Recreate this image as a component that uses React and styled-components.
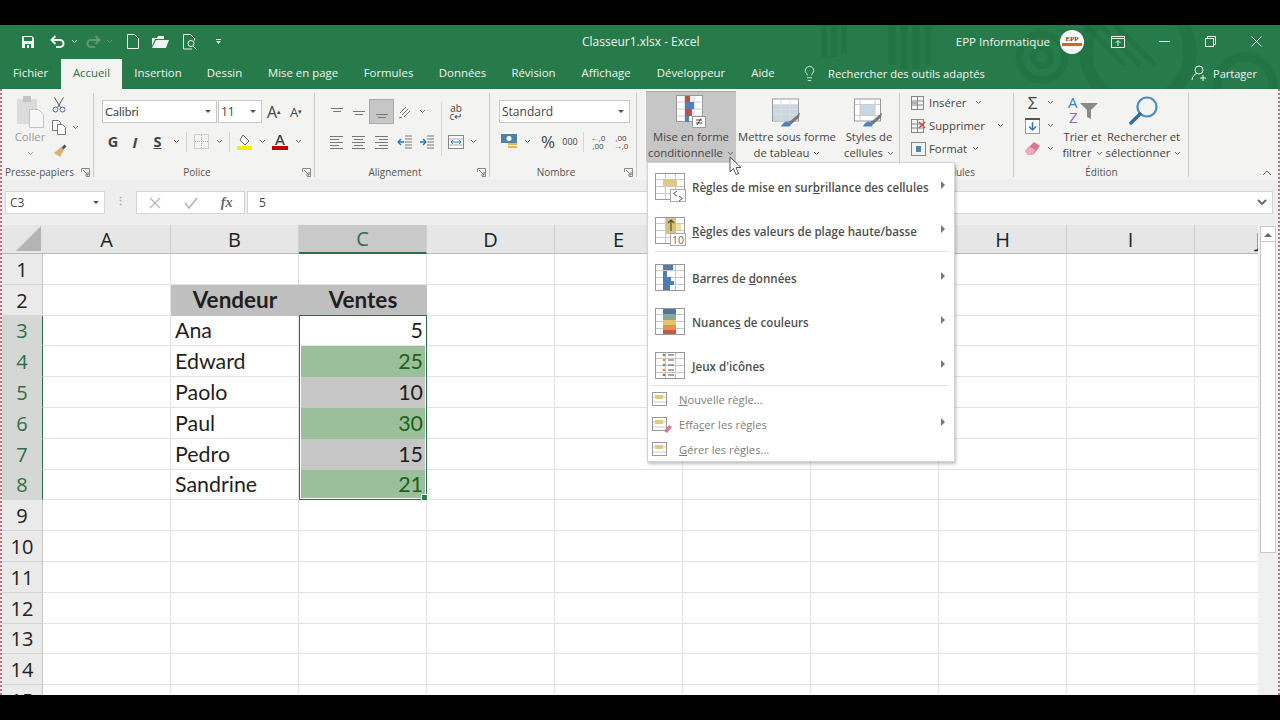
import React from "react";
import styled, { createGlobalStyle } from "styled-components";
import { Lightbulb } from "lucide-react";

const GlobalStyle = createGlobalStyle`
  html, body {
    margin: 0;
    padding: 0;
    background: #000;
  }
  * {
    box-sizing: border-box;
  }
`;

const UI = `"Open Sans", "Noto Sans", "Liberation Sans", sans-serif`;
const GREEN = "#277a4a";

const Page = styled.div`
  width: 1280px;
  height: 720px;
  padding: 25px 0;
  background: #000;
  font-family: ${UI};
  overflow: hidden;
`;
const Window = styled.div`
  position: relative;
  height: 670px;
  background: #f0f0f0;
  overflow: hidden;
  display: flex;
  flex-direction: column;
  &::before,
  &::after {
    content: "";
    position: absolute;
    top: 64px;
    bottom: 0;
    width: 2px;
    z-index: 5;
    background: repeating-linear-gradient(to bottom, #b9757a 0 2px, #f4eeee 2px 4px);
  }
  &::before {
    left: 0;
  }
  &::after {
    right: 0;
  }
`;

/* title bar + tabs */
const Head = styled.div`
  position: relative;
  background: ${GREEN};
  color: #eef5f0;
`;
const Pattern = styled.svg`
  position: absolute;
  top: 0;
  left: 800px;
`;
const TitleRow = styled.div`
  position: relative;
  height: 33px;
  display: grid;
  grid-template-columns: 1fr 116px 1fr;
  align-items: center;
`;
const Qat = styled.div`
  display: flex;
  align-items: center;
  padding-left: 19px;
`;
const QatSlot = styled.div`
  width: ${(p) => p.$w}px;
  margin-left: ${(p) => p.$ml || 0}px;
  display: flex;
  justify-content: center;
  align-items: center;
`;
const Title = styled.div`
  font-size: 12px;
  text-align: center;
  white-space: nowrap;
`;
const TitleRight = styled.div`
  display: flex;
  align-items: center;
  justify-content: flex-end;
  padding-right: 1px;
`;
const UserName = styled.div`
  font-size: 11.6px;
  margin-right: 10px;
  white-space: nowrap;
`;
const Avatar = styled.div`
  position: relative;
  width: 24px;
  height: 24px;
  border-radius: 50%;
  background: #fff;
  color: #6b3d30;
  font: 700 7px "Liberation Serif", serif;
  text-align: center;
  padding-top: 5px;
  overflow: hidden;
  margin-right: 11px;
  &::after {
    content: "";
    position: absolute;
    left: 2px;
    right: 2px;
    top: 13px;
    height: 3px;
    background: #c9682c;
  }
`;
const WinBtn = styled.div`
  width: 46px;
  display: flex;
  justify-content: center;
  align-items: center;
`;
const TabRow = styled.div`
  position: relative;
  height: 31px;
  display: flex;
  align-items: flex-end;
  font-size: 11.4px;
`;
const Tab = styled.div`
  width: ${(p) => p.$w}px;
  height: 30px;
  line-height: 28px;
  text-align: center;
  white-space: nowrap;
  background: ${(p) => (p.$active ? "#f3f3f2" : "transparent")};
  color: ${(p) => (p.$active ? "#2b6f47" : "inherit")};
`;
const Tell = styled.div`
  display: flex;
  align-items: center;
  height: 30px;
  margin-left: 13px;
  gap: 10px;
  padding-bottom: 2px;
  font-size: 11.2px;
  white-space: nowrap;
`;
const Share = styled.div`
  margin-left: auto;
  display: flex;
  align-items: center;
  gap: 6px;
  height: 30px;
  padding: 0 23px 2px 0;
  font-size: 11px;
`;

/* ribbon */
const Ribbon = styled.div`
  position: relative;
  height: 91px;
  display: flex;
  background: #f3f3f2;
  color: #444;
  font-size: 11.3px;
`;
const Group = styled.div`
  position: relative;
  width: ${(p) => p.$w}px;
  flex: none;
  display: flex;
  flex-direction: column;
  &::after {
    content: "";
    position: absolute;
    top: 4px;
    bottom: 3px;
    right: 0;
    width: 1px;
    background: #c9c9c9;
  }
`;
const GroupBody = styled.div`
  height: 76px;
  padding: ${(p) => p.$pad || "11px 0 0 8px"};
  display: flex;
  flex-direction: ${(p) => (p.$row ? "row" : "column")};
  gap: ${(p) => p.$gap || 0}px;
`;
const GroupLabel = styled.div`
  height: 15px;
  line-height: 14px;
  font-size: 10px;
  text-align: center;
  white-space: nowrap;
  color: #555;
  padding-right: ${(p) => (p.$launch ? 15 : 0)}px;
`;
const Launcher = styled.svg`
  position: absolute;
  right: 4px;
  bottom: 3px;
`;
const Tools = styled.div`
  height: 23px;
  margin-bottom: ${(p) => p.$mb || 0}px;
  display: flex;
  align-items: center;
`;
const Tool = styled.div`
  width: ${(p) => p.$w}px;
  height: 23px;
  flex: none;
  display: flex;
  align-items: center;
  justify-content: center;
  color: #444;
  font-size: ${(p) => p.$fs || 13}px;
  font-weight: ${(p) => (p.$bold ? 700 : 400)};
  font-style: ${(p) => (p.$italic ? "italic" : "normal")};
  text-decoration: ${(p) => (p.$under ? "underline" : "none")};
  background: ${(p) => (p.$on ? "#c6c6c6" : "transparent")};
  outline: ${(p) => (p.$on ? "1px solid #aaa" : "none")};
`;
const Stack = styled.span`
  line-height: ${(p) => p.$lh}px;
  text-align: center;
`;
const ToolSep = styled.div`
  width: 1px;
  height: 20px;
  flex: none;
  background: #d6d6d6;
  margin: 0 ${(p) => p.$m || 3}px;
`;
const TallSep = styled(ToolSep)`
  height: 54px;
  margin-top: 2px;
`;
const Combo = styled.div`
  width: ${(p) => p.$w}px;
  height: 23px;
  flex: none;
  display: flex;
  align-items: center;
  justify-content: space-between;
  margin-right: ${(p) => p.$mr || 0}px;
  padding: 0 5px 0 2px;
  background: #fff;
  border: 1px solid #c8c8c8;
  font-family: ${(p) => (p.$calibri ? "Lato, sans-serif" : "inherit")};
  font-size: 12px;
  color: #444;
`;
const Caret = styled.span`
  width: 0;
  height: 0;
  border-left: 3px solid transparent;
  border-right: 3px solid transparent;
  border-top: 3px solid #555;
`;
const Big = styled.div`
  width: ${(p) => p.$w}px;
  height: 71px;
  flex: none;
  margin-left: ${(p) => p.$ml || 0}px;
  display: flex;
  flex-direction: column;
  align-items: center;
  background: ${(p) => (p.$on ? "#c6c6c6" : "transparent")};
  box-shadow: ${(p) => (p.$on ? "inset 0 1px 0 #aaa" : "none")};
  white-space: nowrap;
  line-height: 16px;
  color: ${(p) => (p.$off ? "#999" : "#444")};
`;
const BigIcon = styled.div`
  height: 38px;
  display: flex;
  align-items: flex-end;
  justify-content: center;
  padding-bottom: 1px;
  flex: none;
`;
const BigLine = styled.div`
  display: flex;
  align-items: center;
  gap: 4px;
  height: 16px;
`;
const SideCol = styled.div`
  display: flex;
  flex-direction: column;
  flex: none;
  width: ${(p) => (p.$w ? `${p.$w}px` : "auto")};
  margin-left: ${(p) => p.$ml || 0}px;
  padding-top: ${(p) => p.$pt || 0}px;
`;
const SideRow = styled.div`
  display: flex;
  align-items: center;
  height: 23px;
  gap: 6px;
`;
const CellRow = styled.div`
  height: 23px;
  display: flex;
  align-items: center;
  gap: 3px;
`;
const CellRowGap = styled.span`
  margin-left: ${(p) => p.$m}px;
  display: flex;
`;
const Collapse = styled.svg`
  position: absolute;
  right: 8px;
  bottom: 4px;
`;

/* formula bar */
const FormulaBar = styled.div`
  height: 45px;
  flex: none;
  padding: 11px 7px 11px 5px;
  display: flex;
  align-items: stretch;
  background: #eeeeee;
  color: #444;
  font-size: 12px;
`;
const NameBox = styled.div`
  width: 100px;
  flex: none;
  display: flex;
  align-items: center;
  justify-content: space-between;
  padding: 0 5px 0 4px;
  background: #fff;
  border: 1px solid #d4d4d4;
`;
const Dots = styled.div`
  width: 31px;
  flex: none;
  color: #aaa;
  font-size: 11px;
  text-align: center;
  line-height: 20px;
  font-weight: 700;
`;
const FxBox = styled.div`
  width: 109px;
  flex: none;
  margin-right: 2px;
  display: flex;
  align-items: center;
  justify-content: space-around;
  background: #fff;
  border: 1px solid #d4d4d4;
  color: #aaa;
`;
const Fx = styled.span`
  font: italic 700 14px "Liberation Serif", serif;
  color: #666;
`;
const FormulaInput = styled.div`
  flex: 1;
  display: flex;
  align-items: center;
  justify-content: space-between;
  padding: 0 5px 0 11px;
  background: #fff;
  border: 1px solid #d4d4d4;
`;

/* sheet */
const SheetArea = styled.div`
  flex: 1;
  min-height: 0;
  display: flex;
  background: #f0f0f0;
`;
const Sheet = styled.div`
  position: relative;
  width: 1258px;
  flex: none;
  display: grid;
  grid-template-columns: 43px repeat(10, 128px);
  grid-template-rows: 29px repeat(15, 30.8px);
  overflow: hidden;
  background: #fff;
  font-family: Lato, "Liberation Sans", sans-serif;
  font-size: 21.4px;
  color: #1f1f1f;
`;
const Corner = styled.div`
  position: relative;
  background: #e6e6e6;
  border-bottom: 1px solid #b8b8b8;
  &::after {
    content: "";
    position: absolute;
    right: 2px;
    bottom: 2px;
    width: 0;
    height: 0;
    border-left: 25px solid transparent;
    border-bottom: 25px solid #b4b4b4;
  }
`;
const ColHead = styled.div`
  display: flex;
  align-items: center;
  justify-content: center;
  overflow: hidden;
  font-family: ${UI};
  font-size: 20px;
  background: ${(p) => (p.$on ? "#c9c9c9" : "#e6e6e6")};
  color: ${(p) => (p.$on ? "#2f6e4a" : "#222")};
  border-right: 1px solid #cfcfcf;
  border-bottom: ${(p) => (p.$on ? "2px solid #2f6e4a" : "1px solid #b8b8b8")};
`;
const RowHead = styled.div`
  display: flex;
  align-items: center;
  justify-content: center;
  padding: 1px 0 0 2px;
  font-family: ${UI};
  font-size: 20px;
  background: ${(p) => (p.$on ? "#d5d7d5" : "#eaeaea")};
  color: ${(p) => (p.$on ? "#2f6e4a" : "#222")};
  border-right: ${(p) => (p.$on ? "1px solid #2f6e4a" : "1px solid #c4c4c4")};
  border-bottom: 1px solid #d6d6d6;
`;
const Cell = styled.div`
  display: flex;
  align-items: center;
  padding: 0 3px 0 4px;
  white-space: nowrap;
  justify-content: ${(p) => (p.$head ? "center" : p.$num ? "flex-end" : "flex-start")};
  font-size: ${(p) => (p.$head ? "22.5px" : "inherit")};
  font-weight: ${(p) => (p.$head ? 700 : 400)};
  background: ${(p) => (p.$head ? "#bfbfbf" : p.$bg || "#fff")};
  color: ${(p) => p.$fg || "#1f1f1f"};
  border-right: 1px solid ${(p) => (p.$head ? "#bfbfbf" : p.$bg ? p.$bg : "#e2e2e2")};
  border-bottom: 1px solid ${(p) => (p.$head ? "#bfbfbf" : p.$bg ? p.$bg : "#e2e2e2")};
`;
const Selection = styled.div`
  position: absolute;
  grid-column: 4 / 5;
  grid-row: 4 / 10;
  inset: -1px 0 0 0;
  border: 1px solid #2f6e4a;
  box-shadow: inset 0 0 0 1px #fff;
  &::after {
    content: "";
    position: absolute;
    right: -2px;
    bottom: -2px;
    width: 5px;
    height: 5px;
    background: #2f7f55;
    border: 1px solid #fff;
  }
`;
const ScrollBar = styled.div`
  width: 19px;
  flex: none;
  padding: 1px 1px 0 2px;
  display: flex;
  flex-direction: column;
`;
const ScrollBtn = styled.div`
  height: 16px;
  background: #fff;
  border: 1px solid #c8c8c8;
  display: flex;
  align-items: center;
  justify-content: center;
`;
const ScrollThumb = styled.div`
  height: 311px;
  background: #fff;
  border: 1px solid #c8c8c8;
  border-top: 0;
`;

/* conditional formatting menu */
const Menu = styled.div`
  position: absolute;
  left: 647px;
  top: 137px;
  width: 308px;
  height: 300px;
  z-index: 3;
  padding-top: 2px;
  background: #fff;
  border: 1px solid #d4d4d4;
  box-shadow: 1px 2px 3px rgba(0, 0, 0, 0.25);
  color: #4f4f4f;
`;
const BigItem = styled.div`
  height: 44px;
  display: flex;
  align-items: center;
  padding: 0 9px 0 6px;
  font-size: 11.6px;
  font-weight: 600;
  white-space: nowrap;
`;
const SmallItem = styled.div`
  height: 25px;
  display: flex;
  align-items: center;
  padding: 0 9px 0 4px;
  font-size: 11.2px;
  color: #7d7d7d;
  white-space: nowrap;
`;
const ItemText = styled.span`
  flex: 1;
  margin-left: ${(p) => p.$m}px;
`;
const Arrow = styled.span`
  width: 0;
  height: 0;
  margin-bottom: 5px;
  border-top: 4px solid transparent;
  border-bottom: 4px solid transparent;
  border-left: 4px solid #777;
`;
const MenuLine = styled.div`
  height: 1px;
  margin: ${(p) => p.$m};
  background: #e2e2e2;
`;
const Cursor = styled.svg`
  position: absolute;
  left: 729px;
  top: 131px;
  z-index: 4;
`;

/* drawings */
const Chev = ({ c = "#666" }) => (
  <svg width="7" height="5" viewBox="0 0 7 5">
    <path d="M1 1l2.5 2.5L6 1" fill="none" stroke={c} strokeWidth="1" />
  </svg>
);
const Launch = () => (
  <Launcher width="9" height="9" viewBox="0 0 9 9">
    <path d="M.5 4V.5H8.5V8.5H5" fill="none" stroke="#888" />
    <path d="M2 2l5 5M7 4v3H4" fill="none" stroke="#777" />
  </Launcher>
);
const Lines = ({ rows, w = 14 }) => (
  <svg width={w + 2} height="16" viewBox={`0 0 ${w + 2} 16`}>
    {rows.map(([x, y, l], i) => (
      <rect key={i} x={x} y={y} width={l} height="1" fill="#777" />
    ))}
  </svg>
);
const MenuIcon = ({ children }) => (
  <svg width="32" height="30" viewBox="0 0 32 30" style={{ flex: "none" }}>
    <rect x="1.5" y="1.500" width="29" height="26" fill="#fff" stroke="#999" />
    <path d="M11.500 2v25M21.500 2v25M2 7.500h28M2 14.500h28M2 21.500h28" stroke="#c8c8c8" />
    {children}
  </svg>
);
const MiniRule = ({ children }) => (
  <svg width="20" height="18" viewBox="0 0 20 18" style={{ flex: "none" }}>
    <rect x=".5" y="1.5" width="14" height="13" fill="#fff" stroke="#999" />
    <path d="M1 6h13M1 11h13" stroke="#ccc" />
    <rect x="3" y="4" width="8" height="4" fill="#e2c982" />
    {children}
  </svg>
);

const SaveIcon = () => (
  <svg width="14" height="14" viewBox="0 0 14 14" fill="none">
    <path d="M1 1h10l2 2v10H1z" fill="#eef5f0" />
    <rect x="3" y="2" width="8" height="4" fill={GREEN} />
    <rect x="4" y="9" width="6" height="4" fill={GREEN} />
    <rect x="6" y="10" width="2" height="3" fill="#eef5f0" />
  </svg>
);
const UndoIcon = ({ c = "#eef5f0", flip }) => (
  <svg
    width="15"
    height="13"
    viewBox="0 0 15 13"
    fill="none"
    style={{ transform: flip ? "scaleX(-1)" : "none" }}
  >
    <path d="M2 5h8a3.2 3.2 0 0 1 0 7H6" stroke={c} strokeWidth="2" />
    <path d="M5.5 1L1.5 5l4 4" stroke={c} strokeWidth="2" />
  </svg>
);
const MergeIcon = () => (
  <svg width="16" height="16" viewBox="0 0 16 16" fill="none">
    <rect x=".5" y="1.5" width="15" height="13" fill="#fff" stroke="#888" />
    <path d="M1 5h14M1 11h14" stroke="#aaa" />
    <path d="M3 8h10M3 8l2-2M3 8l2 2M13 8l-2-2M13 8l-2 2" stroke="#2a78b8" />
  </svg>
);
const ScissorsIcon = () => (
  <svg width="14" height="16" viewBox="0 0 14 16" fill="none" stroke="#555">
    <path d="M2.500 .5l6 10M11.500 .5l-6 10" />
    <circle cx="3.500" cy="12.500" r="2.500" stroke="#4a6f9a" />
    <circle cx="10.500" cy="12.500" r="2.500" stroke="#4a6f9a" />
  </svg>
);

const ROWS = [
  [],
  [{ text: "Vendeur", head: 1 }, { text: "Ventes", head: 1 }],
  [{ text: "Ana" }, { text: "5", num: 1 }],
  [{ text: "Edward" }, { text: "25", num: 1, tone: "g" }],
  [{ text: "Paolo" }, { text: "10", num: 1, tone: "s" }],
  [{ text: "Paul" }, { text: "30", num: 1, tone: "g" }],
  [{ text: "Pedro" }, { text: "15", num: 1, tone: "s" }],
  [{ text: "Sandrine" }, { text: "21", num: 1, tone: "g" }],
];
const COLS = ["A", "B", "C", "D", "E", "F", "G", "H", "I", "J"];
const TONES = {
  g: { bg: "#9bbf9b", fg: "#1c611c" },
  s: { bg: "#c6c6c6", fg: "#1f1f1f" },
};

const SheetRows = () =>
  Array.from({ length: 15 }, (_, i) => {
    const n = i + 1;
    const data = ROWS[i] || [];
    return (
      <React.Fragment key={n}>
        <RowHead $on={n >= 3 && n <= 8}>{n}</RowHead>
        {COLS.map((col, c) => {
          const d = c === 1 ? data[0] : c === 2 ? data[1] : null;
          const tone = d && d.tone ? TONES[d.tone] : null;
          return (
            <Cell
              key={col}
              $head={d && d.head}
              $num={d && d.num}
              $bg={tone ? tone.bg : undefined}
              $fg={tone ? tone.fg : undefined}
            >
              {d ? d.text : ""}
            </Cell>
          );
        })}
      </React.Fragment>
    );
  });

const App = () => (
  <>
    <GlobalStyle />
    <Page>
      <Window>
        <Head>
          <Pattern width="480" height="64" viewBox="0 0 480 64" fill="none" stroke="#1f6c3f" strokeOpacity=".4">
            <path d="M24 0v32M34 0v32M44 0v28" strokeWidth="5" />
            <path d="M92 0v40M104 0v44M116 0v44M128 0v40" strokeWidth="7" />
            <circle cx="242" cy="32" r="9" strokeWidth="6" />
            <circle cx="242" cy="32" r="23" strokeWidth="7" />
            <circle cx="338" cy="27" r="52" strokeWidth="13" />
            <path d="M285 0l40 40M300 0l40 40M315 0l40 40" strokeWidth="5" />
            <circle cx="445" cy="60" r="28" strokeWidth="9" />
          </Pattern>
          <TitleRow>
            <Qat>
              <QatSlot $w={17}><SaveIcon /></QatSlot>
              <QatSlot $w={16} $ml={13}><UndoIcon /></QatSlot>
              <QatSlot $w={10} $ml={4}><Chev c="#cfe3d6" /></QatSlot>
              <QatSlot $w={16} $ml={6}><UndoIcon c="#5d9a76" flip /></QatSlot>
              <QatSlot $w={8} $ml={4}><Chev c="#5d9a76" /></QatSlot>
              <QatSlot $w={12} $ml={14}>
                <svg width="12" height="15" viewBox="0 0 12 15" fill="none" stroke="#eef5f0">
                  <path d="M.5.5h7l4 4v10H.5z" />
                </svg>
              </QatSlot>
              <QatSlot $w={18} $ml={12}>
                <svg width="17" height="12" viewBox="0 0 17 12" fill="#eef5f0">
                  <path d="M0 2h5l1-2h6v3H3L0 10z" />
                  <path d="M4 4h13l-3 8H0z" />
                </svg>
              </QatSlot>
              <QatSlot $w={16} $ml={13}>
                <svg width="15" height="16" viewBox="0 0 15 16" fill="none" stroke="#eef5f0">
                  <path d="M9 15H.5V.5h7l4 4v2" />
                  <circle cx="8" cy="9.5" r="3" />
                  <path d="M10 12l3.5 3.5" />
                </svg>
              </QatSlot>
              <QatSlot $w={8} $ml={16}>
                <svg width="7" height="7" viewBox="0 0 7 7" fill="#dcebe1">
                  <path d="M1 1h5v1H1zM1 3h5L3.5 6z" />
                </svg>
              </QatSlot>
            </Qat>
            <Title>Classeur1.xlsx - Excel</Title>
            <TitleRight>
              <UserName>EPP Informatique</UserName>
              <Avatar>EPP</Avatar>
              <WinBtn>
                <svg width="14" height="12" viewBox="0 0 14 12" fill="none" stroke="#eef5f0">
                  <rect x=".5" y=".5" width="13" height="11" />
                  <path d="M1 2.5h12M7 10V5M4.5 7L7 4.5 9.5 7" />
                </svg>
              </WinBtn>
              <WinBtn>
                <svg width="11" height="2" viewBox="0 0 11 2"><rect width="11" height="1" fill="#eef5f0" /></svg>
              </WinBtn>
              <WinBtn>
                <svg width="11" height="11" viewBox="0 0 11 11" fill="none" stroke="#eef5f0">
                  <rect x=".5" y="2.5" width="8" height="8" />
                  <path d="M2.5 2.5v-2h8v8h-2" />
                </svg>
              </WinBtn>
              <WinBtn>
                <svg width="11" height="11" viewBox="0 0 11 11" stroke="#eef5f0">
                  <path d="M.5.5l10 10M10.5.5l-10 10" />
                </svg>
              </WinBtn>
            </TitleRight>
          </TitleRow>
          <TabRow>
            <Tab $w={61}>Fichier</Tab>
            <Tab $w={61} $active>Accueil</Tab>
            <Tab $w={72}>Insertion</Tab>
            <Tab $w={61}>Dessin</Tab>
            <Tab $w={96}>Mise en page</Tab>
            <Tab $w={75}>Formules</Tab>
            <Tab $w={73}>Données</Tab>
            <Tab $w={69}>Révision</Tab>
            <Tab $w={76}>Affichage</Tab>
            <Tab $w={94}>Développeur</Tab>
            <Tab $w={50}>Aide</Tab>
            <Tell>
              <Lightbulb size={17} strokeWidth={1.2} />
              Rechercher des outils adaptés
            </Tell>
            <Share>
              <svg width="16" height="16" viewBox="0 0 16 16" fill="none" stroke="#eef5f0">
                <circle cx="8" cy="5" r="4" />
                <path d="M1 15c.5-3.500 2.500-6 5-6.500M9 13h6M12 10v6" />
              </svg>
              Partager
            </Share>
          </TabRow>
        </Head>

        <Ribbon>
          <Group $w={94}>
            <GroupBody $row $pad="2px 0 0 12px">
              <Big $w={36} $off>
                <BigIcon>
                  <svg width="28" height="33" viewBox="0 0 28 33">
                    <rect x="1" y="4" width="20" height="25" fill="#dcdcdc" />
                    <rect x="7" y="1" width="8" height="6" fill="#c4c4c4" />
                    <path d="M13.500 14.500h9l5 5v13h-14z" fill="#f7f7f7" stroke="#c2c2c2" />
                  </svg>
                </BigIcon>
                <BigLine>Coller</BigLine>
                <BigLine><Chev c="#aaa" /></BigLine>
              </Big>
              <SideCol $ml={4} $pt={2}>
                <SideRow><ScissorsIcon /></SideRow>
                <SideRow>
                  <svg width="14" height="15" viewBox="0 0 14 15" fill="#fff" stroke="#777">
                    <path d="M.5.5h6l2 2v8H.5z" />
                    <path d="M5.500 4.500h5l3 3v7h-8z" />
                  </svg>
                  <Chev />
                </SideRow>
                <SideRow>
                  <svg width="15" height="15" viewBox="0 0 15 15">
                    <path d="M9 4l3 3-4 7-6-4z" fill="#d9b36c" />
                    <path d="M9.500 4.500l3-3 2 2-3 3z" fill="#555" />
                  </svg>
                </SideRow>
              </SideCol>
            </GroupBody>
            <GroupLabel $launch>Presse-papiers</GroupLabel>
            <Launch />
          </Group>

          <Group $w={221}>
            <GroupBody>
              <Tools $mb={7}>
                <Combo $w={115} $mr={1} $calibri>Calibri <Caret /></Combo>
                <Combo $w={44}>11 <Caret /></Combo>
                <Tool $w={22} $fs={16} style={{ marginLeft: 1 }}>A<sup style={{ fontSize: 7 }}>▴</sup></Tool>
                <Tool $w={22} $fs={13}>A<sup style={{ fontSize: 7 }}>▾</sup></Tool>
              </Tools>
              <Tools>
                <Tool $w={22} $bold $fs={14.500}>G</Tool>
                <Tool $w={22} $italic $bold $fs={15}>I</Tool>
                <Tool $w={23} $bold $under $fs={14.500}>S</Tool>
                <Tool $w={14}><Chev /></Tool>
                <ToolSep />
                <Tool $w={22}>
                  <svg width="15" height="15" viewBox="0 0 15 15" fill="none" stroke="#aaa" strokeDasharray="1 1">
                    <rect x=".5" y=".5" width="14" height="14" />
                    <path d="M7.500 1v13M1 7.500h13" />
                  </svg>
                </Tool>
                <Tool $w={14}><Chev /></Tool>
                <ToolSep />
                <Tool $w={22}>
                  <svg width="15" height="16" viewBox="0 0 15 16">
                    <path d="M6 1l6 6-4 4-5-5z" fill="#fff" stroke="#666" />
                    <rect x="0" y="12" width="15" height="4" fill="#f4f000" />
                  </svg>
                </Tool>
                <Tool $w={14}><Chev /></Tool>
                <Tool $w={22}>
                  <svg width="16" height="16" viewBox="0 0 16 16">
                    <path d="M3 11L7 1h2l4 10h-1.800l-1-2.500H5.800l-1 2.500zM6.300 7h3.400L8 2.800z" fill="#444" />
                    <rect y="12" width="16" height="4" fill="#c00000" />
                  </svg>
                </Tool>
                <Tool $w={14}><Chev /></Tool>
              </Tools>
            </GroupBody>
            <GroupLabel $launch>Police</GroupLabel>
            <Launch />
          </Group>

          <Group $w={175}>
            <GroupBody $row $pad="11px 0 0 11px">
              <div>
                <Tools $mb={7}>
                  <Tool $w={22}><Lines rows={[[2, 4, 12], [4, 7, 8]]} /></Tool>
                  <Tool $w={22}><Lines rows={[[2, 7, 12], [4, 10, 8]]} /></Tool>
                  <Tool $w={23} $on><Lines rows={[[2, 10, 12], [4, 13, 8]]} /></Tool>
                  <Tool $w={23}>
                    <svg width="16" height="16" viewBox="0 0 16 16" fill="none" stroke="#777">
                      <path d="M3 9l6-6M5 11l6-6M7 13l6-6" />
                      <path d="M2 14l3-1" stroke="#c0504d" />
                    </svg>
                  </Tool>
                  <Tool $w={12}><Chev /></Tool>
                </Tools>
                <Tools>
                  <Tool $w={22}><Lines rows={[[1, 2, 13], [1, 5, 9], [1, 8, 13], [1, 11, 9], [1, 14, 13]]} /></Tool>
                  <Tool $w={22}><Lines rows={[[1, 2, 13], [3, 5, 9], [1, 8, 13], [3, 11, 9], [1, 14, 13]]} /></Tool>
                  <Tool $w={23}><Lines rows={[[1, 2, 13], [5, 5, 9], [1, 8, 13], [5, 11, 9], [1, 14, 13]]} /></Tool>
                  <Tool $w={23}>
                    <svg width="16" height="16" viewBox="0 0 16 16" fill="none">
                      <path d="M8 2h7M8 5h7M8 8h7M8 11h7M8 14h7" stroke="#777" />
                      <path d="M7 8H1M1 8l3-3M1 8l3 3" stroke="#2a78b8" strokeWidth="1.400" />
                    </svg>
                  </Tool>
                  <Tool $w={22}>
                    <svg width="16" height="16" viewBox="0 0 16 16" fill="none">
                      <path d="M8 2h7M8 5h7M8 8h7M8 11h7M8 14h7" stroke="#777" />
                      <path d="M1 8h6M7 8L4 5M7 8l-3 3" stroke="#2a78b8" strokeWidth="1.400" />
                    </svg>
                  </Tool>
                </Tools>
              </div>
              <TallSep $m={3} />
              <div>
                <Tools $mb={7}>
                  <Tool $w={22} $fs={10}>
                    <Stack $lh={8}>ab<br />c↵</Stack>
                  </Tool>
                </Tools>
                <Tools>
                  <Tool $w={22}><MergeIcon /></Tool>
                  <Tool $w={12}><Chev /></Tool>
                </Tools>
              </div>
            </GroupBody>
            <GroupLabel $launch>Alignement</GroupLabel>
            <Launch />
          </Group>

          <Group $w={147}>
            <GroupBody $pad="11px 0 0 9px">
              <Tools $mb={7}>
                <Combo $w={131}>Standard <Caret /></Combo>
              </Tools>
              <Tools>
                <Tool $w={20}>
                  <svg width="17" height="17" viewBox="0 0 17 17">
                    <rect x="0" y="1" width="16" height="9" fill="#4f81a8" />
                    <circle cx="8" cy="5.500" r="2.500" fill="#fff" />
                    <rect x="7" y="10" width="9" height="2" fill="#e2b85a" />
                    <rect x="7" y="13" width="9" height="2" fill="#e2b85a" />
                  </svg>
                </Tool>
                <Tool $w={16}><Chev /></Tool>
                <Tool $w={26} $fs={17}>%</Tool>
                <Tool $w={18} $fs={9}>000</Tool>
                <ToolSep $m={4} />
                <Tool $w={20} $fs={8}>
                  <Stack $lh={8}>←,0<br />,00</Stack>
                </Tool>
                <Tool $w={26} $fs={8}>
                  <Stack $lh={8}>,00<br />→,0</Stack>
                </Tool>
              </Tools>
            </GroupBody>
            <GroupLabel $launch>Nombre</GroupLabel>
            <Launch />
          </Group>

          <Group $w={263}>
            <GroupBody $row $gap={2} $pad="2px 0 0 9px">
              <Big $w={90} $on>
                <BigIcon>
                  <svg width="30" height="33" viewBox="0 0 30 33">
                    <rect x=".5" y=".5" width="26" height="26" fill="#fff" stroke="#999" />
                    <path d="M9 1v26M18 1v26M1 7h26M1 14h26M1 21h26" stroke="#ccc" />
                    <rect x="9" y="1" width="5" height="7" fill="#c0504d" />
                    <rect x="9" y="7" width="9" height="7" fill="#4f81bd" />
                    <rect x="9" y="14" width="7" height="7" fill="#c0504d" />
                    <rect x="9" y="21" width="4" height="6" fill="#4f81bd" />
                    <rect x="16.500" y="21.500" width="13" height="11" fill="#fff" stroke="#999" />
                    <path d="M20 25h6M20 28h6M25 23.500l-4 6.500" stroke="#444" fill="none" />
                  </svg>
                </BigIcon>
                <BigLine>Mise en forme</BigLine>
                <BigLine>conditionnelle <Chev /></BigLine>
              </Big>
              <Big $w={98}>
                <BigIcon>
                  <svg width="30" height="30" viewBox="0 0 30 29">
                    <rect x=".5" y=".5" width="26" height="22" fill="#fff" stroke="#999" />
                    <rect x="1" y="6" width="25" height="16" fill="#c9d7e3" />
                    <path d="M9 1v21M18 1v21M1 6h25M1 11h25M1 16h25" stroke="#ddd" />
                    <path d="M28 14l-9 8-3 1 3 3 8-7z" fill="#777" />
                    <path d="M15 23c-2 0-5 2-6 5h9l1-3z" fill="#4f81bd" />
                  </svg>
                </BigIcon>
                <BigLine>Mettre sous forme</BigLine>
                <BigLine>de tableau <Chev /></BigLine>
              </Big>
              <Big $w={62}>
                <BigIcon>
                  <svg width="30" height="30" viewBox="0 0 30 29">
                    <rect x=".5" y=".5" width="26" height="22" fill="#fff" stroke="#999" />
                    <rect x="6" y="6" width="15" height="11" fill="#c9d7e3" />
                    <path d="M6 1v21M21 1v21M1 6h25M1 17h25" stroke="#ccc" />
                    <path d="M28 14l-9 8-3 1 3 3 8-7z" fill="#777" />
                    <path d="M15 23c-2 0-5 2-6 5h9l1-3z" fill="#4f81bd" />
                  </svg>
                </BigIcon>
                <BigLine>Styles de</BigLine>
                <BigLine>cellules <Chev /></BigLine>
              </Big>
            </GroupBody>
            <GroupLabel>Styles</GroupLabel>
          </Group>

          <Group $w={114}>
            <GroupBody $pad="2px 0 0 11px">
              <CellRow>
                <svg width="15" height="14" viewBox="0 0 15 14" fill="none" stroke="#888">
                  <rect x=".5" y=".5" width="12" height="13" />
                  <path d="M1 5h11M1 9h11M6.500 1v13" />
                  <path d="M1 7h5" stroke="#2a78b8" />
                </svg>
                Insérer <CellRowGap $m={6}><Chev /></CellRowGap>
              </CellRow>
              <CellRow>
                <svg width="15" height="14" viewBox="0 0 15 14" fill="none" stroke="#888">
                  <rect x=".5" y=".5" width="12" height="13" />
                  <path d="M1 5h11M1 9h11M6.500 1v13" />
                  <path d="M8 3l6 6M14 3l-6 6" stroke="#d04437" strokeWidth="1.300" />
                </svg>
                Supprimer <CellRowGap $m={9}><Chev /></CellRowGap>
              </CellRow>
              <CellRow>
                <svg width="15" height="14" viewBox="0 0 15 14" fill="none" stroke="#888">
                  <rect x=".5" y=".5" width="14" height="13" />
                  <rect x="5" y="4" width="5" height="6" fill="#4f81bd" stroke="none" />
                </svg>
                Format <CellRowGap $m={2}><Chev /></CellRowGap>
              </CellRow>
            </GroupBody>
            <GroupLabel>Cellules</GroupLabel>
          </Group>

          <Group $w={175}>
            <GroupBody $row $pad="2px 0 0 10px">
              <SideCol $w={36}>
                <SideRow>
                  <Tool $w={17} $fs={17}>Σ</Tool>
                  <Chev />
                </SideRow>
                <SideRow>
                  <svg width="17" height="16" viewBox="-1 0 17 16" fill="#fff">
                    <rect x=".5" y=".5" width="14" height="15" stroke="#999" />
                    <rect y="0" width="15" height="2" fill="#555" />
                    <path d="M7.500 4v8M4 8.500l3.500 3.500L11 8.500" stroke="#2a78b8" strokeWidth="1.500" fill="none" />
                  </svg>
                  <Chev />
                </SideRow>
                <SideRow>
                  <svg width="17" height="14" viewBox="0 0 17 14">
                    <path d="M10 0l6 4-7 9H4L1 9z" fill="#d9768f" />
                    <path d="M1 9l4-5 6 4-2 5H4z" fill="#efa9b8" />
                  </svg>
                  <Chev />
                </SideRow>
              </SideCol>
              <Big $w={45}>
                <BigIcon>
                  <svg width="32" height="32" viewBox="0 0 32 32">
                    <text x="1" y="12" fontSize="15" fontFamily="Open Sans" fill="#3f7fbf">A</text>
                    <text x="2" y="27" fontSize="15" fontFamily="Open Sans" fill="#9668b0">Z</text>
                    <path d="M13 7h18l-7 7v9l-4-2v-7z" fill="#8a8a8a" />
                  </svg>
                </BigIcon>
                <BigLine>Trier et</BigLine>
                <BigLine>filtrer <Chev /></BigLine>
              </Big>
              <Big $w={73} $ml={2}>
                <BigIcon>
                  <svg width="29" height="32" viewBox="0 0 29 32" fill="none">
                    <circle cx="18" cy="11" r="9.500" stroke="#4a8ec2" strokeWidth="2.200" />
                    <path d="M11 18L2 27" stroke="#2f6f9f" strokeWidth="3.500" strokeLinecap="round" />
                  </svg>
                </BigIcon>
                <BigLine>Rechercher et</BigLine>
                <BigLine>sélectionner <Chev /></BigLine>
              </Big>
            </GroupBody>
            <GroupLabel>Édition</GroupLabel>
          </Group>

          <Collapse width="10" height="6" viewBox="0 0 10 6">
            <path d="M1 5l4-4 4 4" fill="none" stroke="#666" />
          </Collapse>
        </Ribbon>

        <FormulaBar>
          <NameBox>C3 <Caret /></NameBox>
          <Dots>⋮</Dots>
          <FxBox>
            <svg width="12" height="12" viewBox="0 0 12 12" stroke="#b4b4b4" strokeWidth="1.200">
              <path d="M1 1l10 10M11 1L1 11" />
            </svg>
            <svg width="14" height="12" viewBox="0 0 14 12" fill="none" stroke="#b4b4b4" strokeWidth="1.600">
              <path d="M1 6l4 5 8-10" />
            </svg>
            <Fx>fx</Fx>
          </FxBox>
          <FormulaInput>
            5
            <svg width="10" height="7" viewBox="0 0 10 7" fill="none" stroke="#666" strokeWidth="1.800">
              <path d="M1 1l4 4 4-4" />
            </svg>
          </FormulaInput>
        </FormulaBar>

        <SheetArea>
          <Sheet>
            <Corner />
            {COLS.map((col) => (
              <ColHead key={col} $on={col === "C"}>{col}</ColHead>
            ))}
            <SheetRows />
            <Selection />
          </Sheet>
          <ScrollBar>
            <ScrollBtn>
              <svg width="8" height="5" viewBox="0 0 8 5"><path d="M0 5l4-4 4 4z" fill="#666" /></svg>
            </ScrollBtn>
            <ScrollThumb />
          </ScrollBar>
        </SheetArea>

        <Menu>
          <BigItem>
            <MenuIcon>
              <rect x="9" y="8" width="14" height="6" fill="#e2c982" />
              <rect x="16.500" y="17.500" width="15" height="12" fill="#fff" stroke="#aaa" />
              <path d="M23 19l-3.500 2.500L23 24M25 24l3.500 2.500L25 29" stroke="#555" fill="none" />
            </MenuIcon>
            <ItemText $m={6}>Règles de mise en sur<u>b</u>rillance des cellules</ItemText>
            <Arrow />
          </BigItem>
          <BigItem>
            <MenuIcon>
              <rect x="12" y="2" width="10" height="16" fill="#d6c27e" />
              <rect x="22" y="8" width="5" height="6" fill="#efe0ae" />
              <path d="M17 15V4M14 7l3-3 3 3" stroke="#5a4a2a" strokeWidth="1.200" fill="none" />
              <rect x="16.500" y="17.500" width="15" height="12" fill="#fff" stroke="#aaa" />
              <text x="18" y="28" fontSize="10.500" fontWeight="400" fill="#666" fontFamily="Open Sans">10</text>
            </MenuIcon>
            <ItemText $m={6}><u>R</u>ègles des valeurs de plage haute/basse</ItemText>
            <Arrow />
          </BigItem>
          <MenuLine $m="-2px 6px 4px 7px" />
          <BigItem>
            <MenuIcon>
              <rect x="9" y="2" width="10" height="5" fill="#4f7fb0" />
              <rect x="9" y="8" width="4" height="6" fill="#4f7fb0" />
              <rect x="9" y="14" width="8" height="4" fill="#4f7fb0" />
              <rect x="9" y="18" width="11" height="4" fill="#4f7fb0" />
              <rect x="9" y="22" width="7" height="5" fill="#4f7fb0" />
            </MenuIcon>
            <ItemText $m={6}>Barres de <u>d</u>onnées</ItemText>
            <Arrow />
          </BigItem>
          <BigItem>
            <MenuIcon>
              <rect x="9" y="2" width="13" height="5" fill="#4f7598" />
              <rect x="9" y="7" width="13" height="6" fill="#8aa88f" />
              <rect x="9" y="13" width="13" height="5" fill="#e7c36d" />
              <rect x="9" y="18" width="13" height="5" fill="#e0924f" />
              <rect x="9" y="23" width="13" height="4" fill="#c9573f" />
            </MenuIcon>
            <ItemText $m={6}>Nuance<u>s</u> de couleurs</ItemText>
            <Arrow />
          </BigItem>
          <BigItem>
            <MenuIcon>
              <path d="M14 4h6M14 9h6M14 14h6M14 19h6M14 24h6" stroke="#555" />
              <circle cx="10" cy="4" r="1.300" fill="#5c8f5c" />
              <circle cx="10" cy="9" r="1.300" fill="#d29a3c" />
              <circle cx="10" cy="14" r="1.300" fill="#5c8f5c" />
              <circle cx="10" cy="19" r="1.300" fill="#d29a3c" />
              <circle cx="10" cy="24" r="1.300" fill="#c0504d" />
            </MenuIcon>
            <ItemText $m={6}><u>J</u>eux d'icônes</ItemText>
            <Arrow />
          </BigItem>
          <MenuLine $m="-3px 6px 1px 2px" />
          <SmallItem>
            <MiniRule />
            <ItemText $m={7}><u>N</u>ouvelle règle...</ItemText>
          </SmallItem>
          <SmallItem>
            <MiniRule>
              <path d="M17 9l3 2-5 6-3-2z" fill="#d9768f" />
            </MiniRule>
            <ItemText $m={7}>Effa<u>c</u>er les règles</ItemText>
            <Arrow />
          </SmallItem>
          <SmallItem>
            <MiniRule />
            <ItemText $m={7}><u>G</u>érer les règles...</ItemText>
          </SmallItem>
        </Menu>

        <Cursor width="14" height="20" viewBox="0 0 14 20">
          <path d="M1 1v15l3.500-3.500 2.500 6 2.500-1-2.500-6h5z" fill="#fff" stroke="#555" />
        </Cursor>
      </Window>
    </Page>
  </>
);

export default App;
